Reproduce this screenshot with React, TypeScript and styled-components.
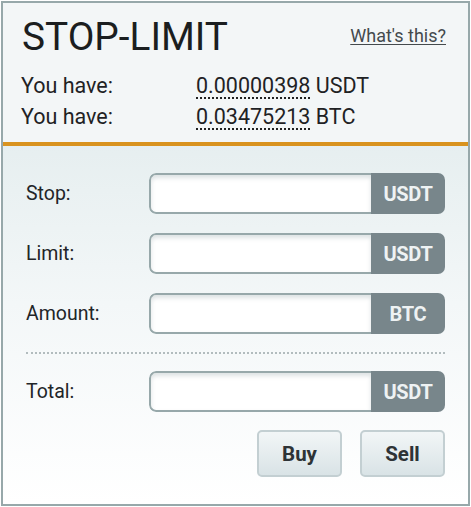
import React from "react";
import styled, { createGlobalStyle } from "styled-components";

const GlobalStyle = createGlobalStyle`
  html, body {
    margin: 0;
    padding: 0;
    background: #ffffff;
  }
  body {
    font-family: Roboto, "Liberation Sans", Arial, sans-serif;
  }
`;

const Page = styled.div`
  padding: 1px;
  width: 471px;
  box-sizing: border-box;
`;

const Panel = styled.div`
  width: 469px;
  height: 505px;
  box-sizing: border-box;
  border: 2px solid #97a8aa;
  display: flex;
  flex-direction: column;
  background: linear-gradient(to bottom, #dbe7e8 0%, #f3f7f8 60%, #ffffff 100%);
`;

const Header = styled.div`
  background: #f3f6f7;
  border-bottom: 4px solid #d9931f;
  padding: 11px 22px 0 18px;
  height: 143px;
  box-sizing: border-box;
  flex-shrink: 0;
`;

const TitleRow = styled.div`
  display: flex;
  justify-content: space-between;
  align-items: flex-start;
`;

const Title = styled.h1`
  margin: 0;
  padding-left: 1px;
  font-size: 38.8px;
  font-weight: 400;
  color: #1b1e20;
  line-height: 46px;
`;

const HelpLink = styled.a`
  margin-top: 11px;
  font-size: 18px;
  color: #444a4d;
  text-decoration: underline;
  text-underline-offset: 2px;
  cursor: pointer;
`;

const BalanceList = styled.div`
  margin-top: 10px;
  display: flex;
  flex-direction: column;
`;

const BalanceRow = styled.div`
  display: grid;
  grid-template-columns: 175px auto;
  font-size: 21.5px;
  line-height: 31px;
  color: #1f2224;
`;

const Amount = styled.span`
  border-bottom: 2px dotted #222;
  line-height: 22px;
  display: inline-block;
`;

const Body = styled.div`
  flex: 1;
  padding: 27px 23px 0 23px;
  display: flex;
  flex-direction: column;
`;

const FieldRow = styled.div`
  display: grid;
  grid-template-columns: 123px 296px;
  align-items: center;
  height: 41px;
  margin-bottom: 19px;
`;

const Label = styled.label`
  font-size: 19.5px;
  color: #222528;
`;

const InputGroup = styled.div`
  display: flex;
  height: 41px;
  border-radius: 7px;
  overflow: hidden;
`;

const Field = styled.input`
  flex: 1;
  min-width: 0;
  border: 2px solid #97a8aa;
  border-right: none;
  border-radius: 7px 0 0 7px;
  background: #ffffff;
  box-shadow: inset 0 3px 4px rgba(120, 140, 145, 0.25);
  outline: none;
  font-size: 18px;
  padding: 0 8px;
  font-family: inherit;
`;

const Unit = styled.span`
  width: 74px;
  background: #78868b;
  color: #eef2f3;
  font-weight: 700;
  font-size: 20px;
  display: flex;
  align-items: center;
  justify-content: center;
  letter-spacing: -0.3px;
`;

const Separator = styled.hr`
  margin: -1px 0 17px 0;
  border: none;
  border-top: 2px dotted #b2bcbe;
  height: 0;
`;

const Actions = styled.div`
  display: flex;
  justify-content: flex-end;
  gap: 18px;
  margin-top: -1px;
`;

const ActionButton = styled.button`
  width: 85px;
  height: 47px;
  border: 2px solid #c3cfd2;
  border-radius: 5px;
  background: linear-gradient(to bottom, #f2f6f7 0%, #d9e3e6 100%);
  font-family: inherit;
  font-weight: 700;
  font-size: 20.5px;
  color: #2e3336;
  cursor: pointer;
`;

const fields = [
  { label: "Stop:", unit: "USDT" },
  { label: "Limit:", unit: "USDT" },
  { label: "Amount:", unit: "BTC" },
];

export default function App() {
  return (
    <Page>
      <GlobalStyle />
      <Panel>
        <Header>
          <TitleRow>
            <Title>STOP-LIMIT</Title>
            <HelpLink>What's this?</HelpLink>
          </TitleRow>
          <BalanceList>
            <BalanceRow>
              <span>You have:</span>
              <span>
                <Amount>0.00000398</Amount> USDT
              </span>
            </BalanceRow>
            <BalanceRow>
              <span>You have:</span>
              <span>
                <Amount>0.03475213</Amount> BTC
              </span>
            </BalanceRow>
          </BalanceList>
        </Header>
        <Body>
          {fields.map((f) => (
            <FieldRow key={f.label}>
              <Label>{f.label}</Label>
              <InputGroup>
                <Field type="text" />
                <Unit>{f.unit}</Unit>
              </InputGroup>
            </FieldRow>
          ))}
          <Separator />
          <FieldRow>
            <Label>Total:</Label>
            <InputGroup>
              <Field type="text" />
              <Unit>USDT</Unit>
            </InputGroup>
          </FieldRow>
          <Actions>
            <ActionButton>Buy</ActionButton>
            <ActionButton>Sell</ActionButton>
          </Actions>
        </Body>
      </Panel>
    </Page>
  );
}
